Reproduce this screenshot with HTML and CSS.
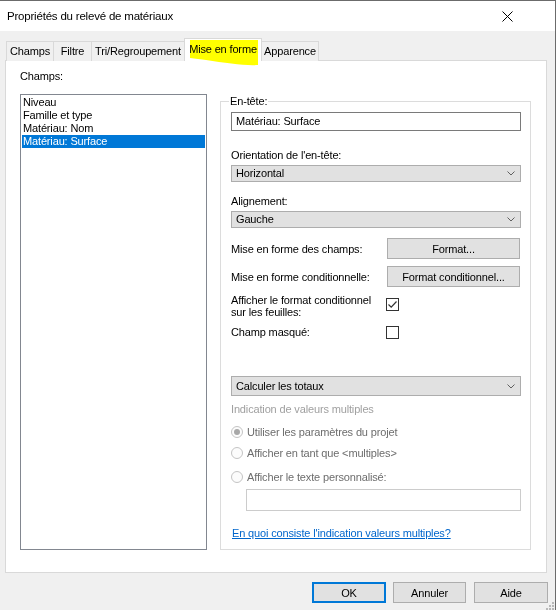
FILE: index.html
```html
<!DOCTYPE html>
<html lang="fr">
<head>
<meta charset="utf-8">
<title>Propriétés du relevé de matériaux</title>
<link rel="stylesheet" href="styles.css">
</head>
<body>
<div class="window">
  <div class="titlebar">
    <span class="title">Propriétés du relevé de matériaux</span>
    <svg class="close" width="11" height="11" viewBox="0 0 11 11"><path d="M0.5 0.5 L10.5 10.5 M10.5 0.5 L0.5 10.5" stroke="#000" stroke-width="1" fill="none"/></svg>
  </div>
  <div class="client">
    <div class="tabs">
      <div class="tab tab-champs">Champs</div>
      <div class="tab tab-filtre">Filtre</div>
      <div class="tab tab-tri">Tri/Regroupement</div>
      <div class="tab tab-mise selected">Mise en forme</div>
      <div class="tab tab-app">Apparence</div>
    </div>
    <div class="pane">
      <div class="fields-col">
        <div class="caption">Champs:</div>
        <div class="listbox">
          <div class="item">Niveau</div>
          <div class="item">Famille et type</div>
          <div class="item">Matériau: Nom</div>
          <div class="item sel">Matériau: Surface</div>
        </div>
      </div>
      <fieldset class="group">
        <legend>En-tête:</legend>
        <div class="textbox">Matériau: Surface</div>
        <div class="label first">Orientation de l'en-tête:</div>
        <div class="combo"><span>Horizontal</span><svg class="chev" width="8" height="5" viewBox="0 0 8 5"><path d="M0.5 0.5 L4 4 L7.5 0.5" stroke="#606060" fill="none"/></svg></div>
        <div class="label">Alignement:</div>
        <div class="combo"><span>Gauche</span><svg class="chev" width="8" height="5" viewBox="0 0 8 5"><path d="M0.5 0.5 L4 4 L7.5 0.5" stroke="#606060" fill="none"/></svg></div>
        <div class="opts">
          <div class="opt-label">Mise en forme des champs:</div>
          <div class="btn">Format...</div>
          <div class="opt-label">Mise en forme conditionnelle:</div>
          <div class="btn">Format conditionnel...</div>
          <div class="opt-label two">Afficher le format conditionnel<br>sur les feuilles:</div>
          <div class="chk-cell top"><span class="chk"><svg width="11" height="11" viewBox="0 0 11 11"><path d="M1.5 5.5 L4.2 8.2 L9.5 2.5" stroke="#333" stroke-width="1.2" fill="none"/></svg></span></div>
          <div class="opt-label">Champ masqué:</div>
          <div class="chk-cell"><span class="chk"></span></div>
        </div>
        <div class="combo totals"><span>Calculer les totaux</span><svg class="chev" width="8" height="5" viewBox="0 0 8 5"><path d="M0.5 0.5 L4 4 L7.5 0.5" stroke="#606060" fill="none"/></svg></div>
        <div class="disabled-caption">Indication de valeurs multiples</div>
        <div class="radios">
          <div class="radio-row"><span class="radio on"></span><span>Utiliser les paramètres du projet</span></div>
          <div class="radio-row"><span class="radio"></span><span>Afficher en tant que &lt;multiples&gt;</span></div>
          <div class="radio-row last"><span class="radio"></span><span>Afficher le texte personnalisé:</span></div>
        </div>
        <div class="textbox disabled"></div>
        <a class="link" href="#">En quoi consiste l'indication valeurs multiples?</a>
      </fieldset>
    </div>
    <div class="buttons">
      <div class="btn dlg default">OK</div>
      <div class="btn dlg">Annuler</div>
      <div class="btn dlg aide">Aide</div>
    </div>
  </div>
  <svg class="highlight" width="72" height="28" viewBox="188 39 72 28"><path d="M190 40 L258 40 L258 65 C246 66 226 63 206 60 L190 58 Z" fill="#ffff00"/></svg>
  <svg class="grip" width="9" height="9" viewBox="0 0 9 9"><g fill="#b8b8b8"><rect x="7" y="1" width="2" height="2"/><rect x="4" y="4" width="2" height="2"/><rect x="7" y="4" width="2" height="2"/><rect x="1" y="7" width="2" height="2"/><rect x="4" y="7" width="2" height="2"/><rect x="7" y="7" width="2" height="2"/></g></svg>
</div>
</body>
</html>
```
FILE: styles.css
```css
* { box-sizing: border-box; }
html, body { margin: 0; padding: 0; }
body {
  width: 556px;
  height: 610px;
  overflow: hidden;
  font-family: "Segoe UI", "Liberation Sans", Arial, sans-serif;
  font-size: 11px;
  letter-spacing: -0.15px;
  color: #000;
}
.window {
  position: relative;
  width: 556px;
  height: 610px;
  background: #f0f0f0;
  border-top: 1px solid #6b6b6b;
  border-right: 1px solid #6b6b6b;
}
.titlebar {
  height: 30px;
  background: #fff;
  display: flex;
  align-items: center;
  padding-left: 7px;
}
.title { font-size: 11.5px; letter-spacing: -0.2px; }
.close { margin-left: auto; margin-right: 42px; }
.client {
  padding: 7px 7px 0 5px;
}
.tabs {
  display: flex;
  align-items: flex-end;
  height: 23px;
  padding-left: 1px;
}
.tab {
  height: 20px;
  border: 1px solid #d9d9d9;
  border-bottom: none;
  background: #f0f0f0;
  display: flex;
  align-items: center;
  justify-content: center;
  margin-left: -1px;
  line-height: 14px;
  padding-bottom: 1px;
  white-space: nowrap;
}
.tab-champs { width: 48px; margin-left: 0; }
.tab-filtre { width: 39px; }
.tab-tri { width: 94px; }
.tab-mise { width: 78px; }
.tab-app { width: 58px; }
.tab.selected {
  height: 23px;
  background: #fff;
  position: relative;
  z-index: 1;
  padding-bottom: 3px;
}
.pane {
  margin-top: -1px;
  width: 542px;
  height: 513px;
  background: #fff;
  border: 1px solid #d9d9d9;
  display: grid;
  grid-template-columns: 187px 311px;
  column-gap: 13px;
  padding: 0 14px;
  align-items: start;
}
.fields-col { padding-top: 8px; }
.caption { line-height: 14px; }
.listbox {
  margin-top: 11px;
  height: 456px;
  border: 1px solid #828790;
  padding: 1px;
}
.item {
  height: 13px;
  line-height: 13px;
  padding-left: 1px;
  white-space: nowrap;
}
.item.sel { background: #0078d7; color: #fff; }
.group {
  margin: 33px 0 0 0;
  min-width: 0;
  height: 456px;
  border: 1px solid #dcdcdc;
  padding: 4px 9px 0 10px;
}
.group legend {
  padding: 0 1px;
  margin-left: -2px;
  line-height: 14px;
}
.textbox {
  height: 19px;
  border: 1px solid #7a7a7a;
  padding-left: 4px;
  line-height: 17px;
  background: #fff;
}
.label { line-height: 14px; margin-top: 12px; }
.label.first { margin-top: 17px; }
.combo {
  margin-top: 3px;
  height: 17px;
  background: #e1e1e1;
  border: 1px solid #adadad;
  display: flex;
  align-items: center;
  justify-content: space-between;
  padding: 0 5px 0 4px;
  line-height: 15px;
}
.chev { display: block; }
.opts {
  margin-top: 10px;
  display: grid;
  grid-template-columns: 156px 133px;
  row-gap: 7px;
  align-items: center;
}
.opt-label { line-height: 14px; }
.opt-label.two { line-height: 12px; }
.btn {
  height: 21px;
  background: #e1e1e1;
  border: 1px solid #adadad;
  display: flex;
  align-items: center;
  justify-content: center;
  line-height: 14px;
}
.chk-cell { height: 14px; margin-left: -1px; display: flex; align-items: center; }
.chk-cell.top { align-self: start; padding-top: 4px; height: 17px; }
.chk {
  width: 13px;
  height: 13px;
  border: 1px solid #333;
  background: #fff;
  display: block;
}
.chk svg { display: block; }
.combo.totals { margin-top: 37px; height: 20px; }
.disabled-caption {
  margin-top: 6px;
  line-height: 14px;
  color: #a0a0a0;
}
.radios { margin-top: 5px; }
.radio-row {
  height: 21px;
  display: flex;
  align-items: center;
  gap: 4px;
  color: #6d6d6d;
}
.radio-row.last { margin-top: 3px; }
.radio {
  width: 12px;
  height: 12px;
  border-radius: 50%;
  border: 1px solid #c4c4c4;
  background: #fcfcfc;
  display: flex;
  align-items: center;
  justify-content: center;
}
.radio.on::after {
  content: "";
  width: 6px;
  height: 6px;
  border-radius: 50%;
  background: #a8a8a8;
}
.textbox.disabled {
  margin-top: 2px;
  margin-left: 15px;
  height: 22px;
  border-color: #cccccc;
}
.link {
  display: block;
  margin-top: 15px;
  line-height: 14px;
  color: #0066cc;
  text-decoration: underline;
  margin-left: 1px;
}
.buttons {
  margin-top: 9px;
  display: flex;
  justify-content: flex-end;
  gap: 7px;
}
.btn.dlg { width: 73px; height: 21px; }
.btn.dlg.default { border: 2px solid #0078d7; width: 74px; }
.btn.dlg.aide { width: 74px; margin-left: 1px; }
.highlight {
  position: absolute;
  left: 188px;
  top: 38px;
  mix-blend-mode: multiply;
  z-index: 5;
  pointer-events: none;
}
.grip {
  position: absolute;
  right: 1px;
  bottom: 0;
}
```
